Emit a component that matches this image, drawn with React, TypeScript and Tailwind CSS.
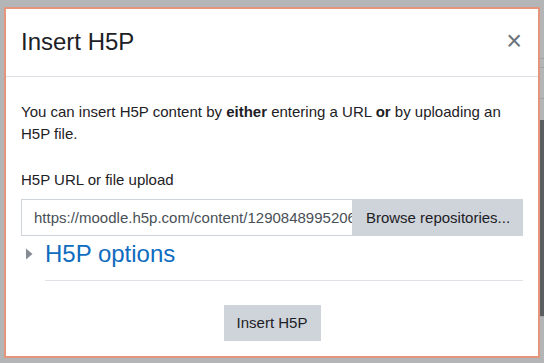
import React from "react";

export default function App() {
  const font = { fontFamily: '"Liberation Sans", Arial, sans-serif' };
  return (
    <div className="w-[544px] h-[363px] bg-[#b4b5b7] flex overflow-hidden" style={font}>
      <div className="pl-[4px] pt-[7px]">
        <div className="w-[536px] h-[351px] border-2 border-[#e5957c] bg-white flex flex-col">
          <div className="h-[68px] border-b border-[#dee2e6] flex items-center justify-between pl-[15px] pr-[16px]">
            <h5 className="text-[24px] text-[#1d2125] leading-none pb-[2px]">Insert H5P</h5>
            <span className="text-[27px] text-[#6a737b] leading-none font-light pb-[2px]">×</span>
          </div>
          <div className="px-[15px] pt-[24px] text-[15px] text-[#1d2125] leading-[22px]">
            <p className="mb-[24px]">
              You can insert H5P content by <b>either</b> entering a URL <b>or</b> by uploading an H5P file.
            </p>
            <div className="mb-[8px]">H5P URL or file upload</div>
            <div className="flex h-[37px]">
              <div className="flex-1 min-w-0 border border-[#ced4da] flex items-center pl-[12px] overflow-hidden whitespace-nowrap text-[#495057]">
                https://moodle.h5p.com/content/1290848995206
              </div>
              <div className="w-[170px] bg-[#ced4da] flex items-center justify-center text-[#1d2125]">
                Browse repositories...
              </div>
            </div>
            <div className="flex items-center h-[36px]">
              <svg width="24" height="16" viewBox="0 0 24 16" className="shrink-0">
                <polygon points="5,2.5 11.5,8 5,13.5" fill="#858b92" />
              </svg>
              <span className="text-[24px] text-[#0f6cbf] leading-none">H5P options</span>
            </div>
            <div className="ml-[24px] border-b border-[#dee2e6] mt-[8px]"></div>
            <div className="flex justify-center mt-[24px]">
              <div className="w-[97px] h-[36px] bg-[#ced4da] flex items-center justify-center text-[#1d2125]">
                Insert H5P
              </div>
            </div>
          </div>
        </div>
      </div>
      <div className="flex-1 flex flex-col pt-[58px]">
        <div className="border-t border-[#9fa2a6] h-[9px]"></div>
        <div className="border-t border-[#9fa2a6] h-[31px]"></div>
        <div className="border-t border-[#9fa2a6] h-[22px]"></div>
        <div className="bg-[#5a5e61] h-[196px]"></div>
        <div className="border-t border-[#9fa2a6]"></div>
      </div>
    </div>
  );
}
